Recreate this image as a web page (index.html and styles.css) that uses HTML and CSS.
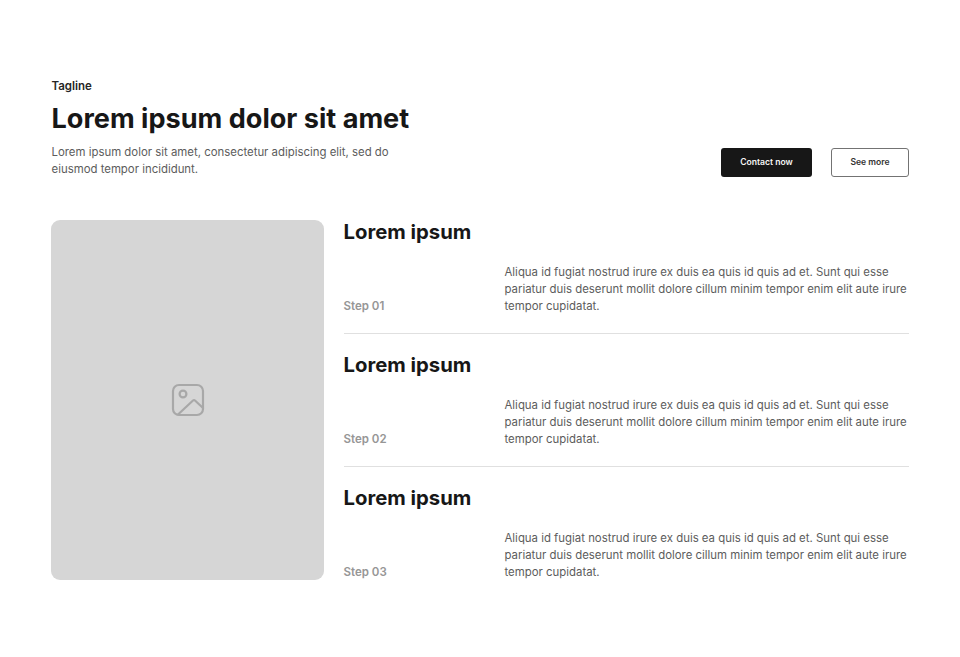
FILE: index.html
```html
<!DOCTYPE html>
<html lang="en">
<head>
<meta charset="utf-8">
<title>Steps</title>
<link rel="stylesheet" href="styles.css">
</head>
<body>
<main class="page">
  <header class="head">
    <div class="intro">
      <p class="tagline">Tagline</p>
      <h1 class="title">Lorem ipsum dolor sit amet</h1>
      <p class="lead">Lorem ipsum dolor sit amet, consectetur adipiscing elit, sed do eiusmod tempor incididunt.</p>
    </div>
    <div class="actions">
      <a class="btn btn-dark">Contact now</a>
      <a class="btn btn-light">See more</a>
    </div>
  </header>
  <section class="content">
    <div class="media">
      <svg class="media-icon" width="34" height="34" viewBox="0 0 34 34" fill="none" stroke="#a8a8a8" stroke-width="2.2" stroke-linecap="round" stroke-linejoin="round">
        <rect x="2" y="2" width="30" height="30" rx="6"/>
        <circle cx="12" cy="11" r="3.4"/>
        <path d="M7 31.5 22 17.5a1.5 1.5 0 0 1 2 0l8 7.5"/>
      </svg>
    </div>
    <div class="steps">
      <article class="step">
        <h2 class="step-title">Lorem ipsum</h2>
        <div class="step-row">
          <span class="step-label">Step 01</span>
          <p class="step-text">Aliqua id fugiat nostrud irure ex duis ea quis id quis ad et. Sunt qui esse pariatur duis deserunt mollit dolore cillum minim tempor enim elit aute irure tempor cupidatat.</p>
        </div>
      </article>
      <article class="step">
        <h2 class="step-title">Lorem ipsum</h2>
        <div class="step-row">
          <span class="step-label">Step 02</span>
          <p class="step-text">Aliqua id fugiat nostrud irure ex duis ea quis id quis ad et. Sunt qui esse pariatur duis deserunt mollit dolore cillum minim tempor enim elit aute irure tempor cupidatat.</p>
        </div>
      </article>
      <article class="step">
        <h2 class="step-title">Lorem ipsum</h2>
        <div class="step-row">
          <span class="step-label">Step 03</span>
          <p class="step-text">Aliqua id fugiat nostrud irure ex duis ea quis id quis ad et. Sunt qui esse pariatur duis deserunt mollit dolore cillum minim tempor enim elit aute irure tempor cupidatat.</p>
        </div>
      </article>
    </div>
  </section>
</main>
</body>
</html>
```
FILE: styles.css
```css
* { box-sizing: border-box; }
html, body { margin: 0; padding: 0; background: #fff; }
body { font-family: Inter, "Liberation Sans", sans-serif; color: #171717; }
.page { width: 960px; height: 657px; padding: 75px 51px 0 51px; overflow: hidden; }
.head { display: flex; justify-content: space-between; align-items: flex-end; height: 102.5px; padding-left: 0.5px; }
.intro { width: 360px; }
.tagline { margin: 0 0 2px; font-size: 11.5px; line-height: 15px; font-weight: 600; color: #262626; }
.title { margin: 7px 0 0; font-size: 27.1px; line-height: 35px; font-weight: 700; }
.lead { margin: 8px 0 0; font-size: 11.4px; line-height: 17px; color: #5c5c5c; }
.actions { display: flex; gap: 19px; margin-bottom: 0.5px; }
.btn { display: flex; align-items: center; justify-content: center; height: 29.5px; border-radius: 3px; font-size: 8.6px; font-weight: 600; }
.btn-dark { width: 91px; background: #171717; color: #f5f5f5; }
.btn-light { width: 78px; background: #fff; color: #333; border: 1px solid #737373; }
.content { display: flex; gap: 19.5px; margin-top: 42.5px; }
.media { flex: none; width: 273px; height: 360px; border-radius: 9px; background: #d6d6d6; display: flex; align-items: center; justify-content: center; }
.steps { flex: 1; display: flex; flex-direction: column; gap: 19px; }
.step { height: 114px; border-bottom: 1px solid #e0e0e0; }
.step:last-child { border-bottom: 0; }
.step-title { margin: 0; font-size: 20.3px; line-height: 24px; font-weight: 700; }
.step-row { display: flex; align-items: flex-end; margin-top: 20px; }
.step-label { flex: none; width: 161px; font-size: 11.5px; line-height: 17px; font-weight: 600; color: #969696; }
.step-text { margin: 0; flex: 1; font-size: 11.4px; line-height: 17px; color: #5c5c5c; }
```
